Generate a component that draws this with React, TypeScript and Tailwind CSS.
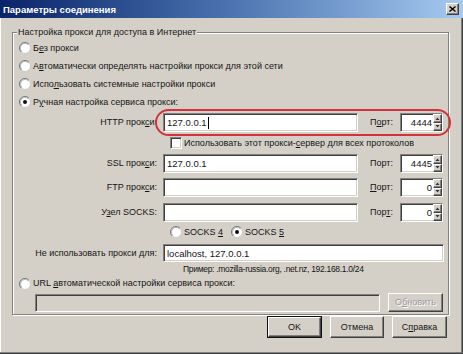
import React from "react";

const sunken =
  "border border-[#808080] border-r-white border-b-white shadow-[inset_1px_1px_0_#404040,inset_-1px_-1px_0_#d4d0c8]";
const raised =
  "border border-white border-r-[#404040] border-b-[#404040] shadow-[inset_-1px_-1px_0_#808080]";

function U({ children }: { children: React.ReactNode }) {
  return <span className="underline underline-offset-[1px]">{children}</span>;
}

function Radio({ checked }: { checked?: boolean }) {
  return (
    <svg width="12" height="12" viewBox="0 0 12 12" className="shrink-0">
      <circle cx="6" cy="6" r="5.5" fill="#fff" stroke="#c8c8c8" />
      <path d="M2.1 9.9 A5.5 5.5 0 0 1 9.9 2.1" stroke="#7a7a7a" fill="none" />
      <path d="M2.8 9.2 A4.5 4.5 0 0 1 9.2 2.8" stroke="#b5b5b5" fill="none" />
      {checked && <circle cx="6" cy="6" r="2" fill="#111" />}
    </svg>
  );
}

function RadioRow({
  checked,
  children,
  className = "",
}: {
  checked?: boolean;
  children: React.ReactNode;
  className?: string;
}) {
  return (
    <div className={"flex items-center gap-[2px] " + className}>
      <Radio checked={checked} />
      <span>{children}</span>
    </div>
  );
}

function Field({
  children,
  className = "",
  disabled,
}: {
  children?: React.ReactNode;
  className?: string;
  disabled?: boolean;
}) {
  return (
    <div
      className={
        sunken +
        " flex items-center pl-[3px] text-[9.5px] " +
        (disabled ? "bg-[#d4d0c8] " : "bg-white ") +
        className
      }
    >
      {children}
    </div>
  );
}

function Arrow({ up }: { up?: boolean }) {
  return (
    <svg width="5" height="3" viewBox="0 0 5 3">
      {up ? <path d="M0.5 3 L2.5 0.5 L4.5 3 Z" fill="#333" /> : <path d="M0.5 0 L2.5 2.5 L4.5 0 Z" fill="#333" />}
    </svg>
  );
}

function PortBox({ value }: { value: string }) {
  return (
    <div className={sunken + " bg-white w-[43px] h-[19px] flex items-stretch"}>
      <div className="flex-1 flex items-center justify-end pr-[1px] text-[9.5px]">{value}</div>
      <div className="w-[9px] flex flex-col">
        <div className={raised + " bg-[#d4d0c8] flex-1 flex items-center justify-center"}>
          <Arrow up />
        </div>
        <div className={raised + " bg-[#d4d0c8] flex-1 flex items-center justify-center"}>
          <Arrow />
        </div>
      </div>
    </div>
  );
}

function ProxyRow({
  label,
  value,
  port,
  portLabel,
  cursor,
  className = "",
}: {
  label: React.ReactNode;
  value?: string;
  port: string;
  portLabel: React.ReactNode;
  cursor?: boolean;
  className?: string;
}) {
  return (
    <div className={"flex items-center h-[19px] " + className}>
      <div className="w-[144px] text-right">{label}</div>
      <Field className="ml-[6px] w-[195px] h-[19px]">
        {value}
        {cursor && <span className="ml-[1px] inline-block w-[1px] h-[12px] bg-black" />}
      </Field>
      <div className="ml-[12px] w-[30px]">{portLabel}</div>
      <PortBox value={port} />
    </div>
  );
}

function Button({
  children,
  className = "",
  isDefault,
  disabled,
}: {
  children: React.ReactNode;
  className?: string;
  isDefault?: boolean;
  disabled?: boolean;
}) {
  const inner = (
    <div
      className={
        raised +
        " bg-[#d4d0c8] h-full w-full flex items-center justify-center " +
        (disabled ? "text-[#9a9a9a] [text-shadow:1px_1px_0_#fff]" : "")
      }
    >
      {children}
    </div>
  );
  if (isDefault)
    return <div className={"border border-[#111] " + className}>{inner}</div>;
  return <div className={className}>{inner}</div>;
}

export default function App() {
  return (
    <div className="w-[463px] h-[354px] bg-[#d4d0c8] text-[9px] leading-[11px] text-[#151515] font-['Liberation_Sans',Arial,sans-serif] flex flex-col shadow-[inset_-1px_-1px_0_#404040,inset_-2px_-2px_0_#808080,inset_1px_0_0_#fff] overflow-hidden">
      {/* Title bar */}
      <div className="h-[18px] flex items-center justify-between bg-gradient-to-r from-[#0a246a] via-[#4d74b0] to-[#a6caf0] pl-[3px] pr-[4px]">
        <span className="text-white font-bold text-[9.5px]">Параметры соединения</span>
        <div className={raised + " bg-[#d4d0c8] w-[13px] h-[12px] flex items-center justify-center"}>
          <svg width="7" height="6" viewBox="0 0 7 6">
            <path d="M0.5 0.5 L6.5 5.5 M6.5 0.5 L0.5 5.5" stroke="#000" strokeWidth="1.4" />
          </svg>
        </div>
      </div>

      <div className="pl-[12px] pt-[8px] flex flex-col">
        <fieldset className="w-[437px] border border-[#808080] shadow-[1px_1px_0_#fff,inset_1px_1px_0_#fff] pb-[2px]">
          <legend className="ml-[4px] px-[1px] bg-[#d4d0c8] leading-[12px]">
            Настройка прокси для доступа в Интернет
          </legend>
          <div className="flex flex-col pl-[6px] mt-[1px]">
            <RadioRow className="h-[18px]">
              Б<U>е</U>з прокси
            </RadioRow>
            <RadioRow className="h-[18px]">
              А<U>в</U>томатически определять настройки прокси для этой сети
            </RadioRow>
            <RadioRow className="h-[18px]">
              Испо<U>л</U>ьзовать системные настройки прокси
            </RadioRow>
            <RadioRow className="h-[18px]" checked>
              Р<U>у</U>чная настройка сервиса прокси:
            </RadioRow>
          </div>

          <div className="relative mt-[2px]">
            <ProxyRow
              label={
                <>
                  HTTP прок<U>с</U>и:
                </>
              }
              value="127.0.0.1"
              cursor
              port="4444"
              portLabel={
                <>
                  П<U>о</U>рт:
                </>
              }
            />
            <div className="absolute left-[142px] top-[-4px] w-[296px] h-[27px] rounded-full border-2 border-[#d2323a] pointer-events-none" />
          </div>

          <div className="h-[20px] flex items-center pl-[157px] mt-[1px]">
            <div className={sunken + " bg-white w-[12px] h-[12px] shrink-0"} />
            <span className="ml-[2px]">
              Использовать этот прокси-<U>с</U>ервер для всех протоколов
            </span>
          </div>

          <ProxyRow
            className="mt-[1px]"
            label={
              <>
                SSL прок<U>с</U>и:
              </>
            }
            value="127.0.0.1"
            port="4445"
            portLabel="Порт:"
          />
          <ProxyRow
            className="mt-[5px]"
            label={
              <>
                FTP прок<U>с</U>и:
              </>
            }
            port="0"
            portLabel={
              <>
                <U>П</U>орт:
              </>
            }
          />
          <ProxyRow
            className="mt-[6px]"
            label={
              <>
                У<U>з</U>ел SOCKS:
              </>
            }
            port="0"
            portLabel={
              <>
                Пор<U>т</U>:
              </>
            }
          />

          <div className="h-[18px] flex items-center pl-[157px] mt-[1px]">
            <RadioRow>
              SOCKS <U>4</U>
            </RadioRow>
            <RadioRow className="ml-[8px]" checked>
              SOCKS <U>5</U>
            </RadioRow>
          </div>

          <div className="flex items-center h-[18px] mt-[3px]">
            <div className="w-[144px] text-right">
              Не использовать прокси <U>д</U>ля:
            </div>
            <Field className="ml-[6px] w-[281px] h-[18px]">localhost, 127.0.0.1</Field>
          </div>

          <div className="h-[14px] flex items-center pl-[170px] text-[8.5px] tracking-[-0.3px]">
            Пример: .mozilla-russia.org, .net.nz, 192.168.1.0/24
          </div>

          <RadioRow className="h-[15px] pl-[6px]">
            URL <U>а</U>втоматической настройки сервиса прокси:
          </RadioRow>

          <div className="flex items-center mt-[2px] h-[19px]">
            <Field disabled className="ml-[22px] w-[345px] h-[18px]" />
            <Button disabled className="ml-[8px] w-[55px] h-[19px]">
              О<U>б</U>новить
            </Button>
          </div>
        </fieldset>

        <div className="flex justify-end gap-[8px] mt-[1px] w-[435px]">
          <Button isDefault className="w-[55px] h-[22px]">
            OK
          </Button>
          <Button className="w-[54px] h-[22px]">Отмена</Button>
          <Button className="w-[55px] h-[22px]">
            С<U>п</U>равка
          </Button>
        </div>
      </div>
    </div>
  );
}
